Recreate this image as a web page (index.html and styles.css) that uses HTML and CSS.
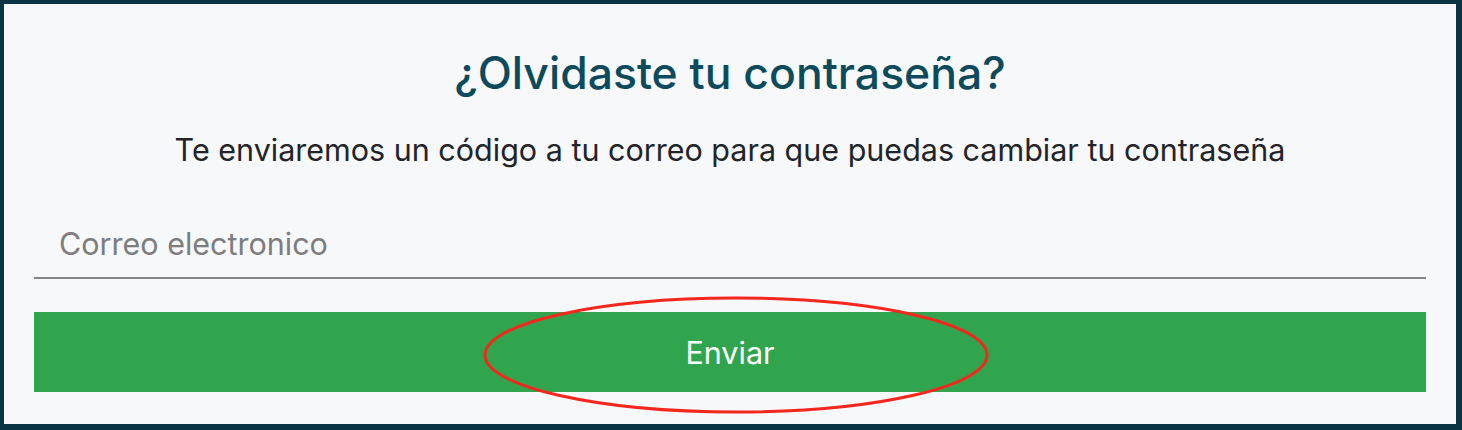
FILE: index.html
```html
<!DOCTYPE html>
<html lang="es">
<head>
<meta charset="utf-8">
<link rel="stylesheet" href="styles.css">
</head>
<body>
<div class="frame">
  <main class="panel">
    <h1 class="title">¿Olvidaste tu contraseña?</h1>
    <p class="subtitle">Te enviaremos un código a tu correo para que puedas cambiar tu contraseña</p>
    <div class="field">
      <input class="input" type="email" placeholder="Correo electronico">
    </div>
    <div class="btn-wrap">
      <button class="btn">Enviar</button>
      <svg class="mark" width="510" height="122" viewBox="0 0 510 122">
        <ellipse cx="255" cy="61" rx="251" ry="57" fill="none" stroke="#f5261c" stroke-width="3"/>
      </svg>
    </div>
  </main>
</div>
</body>
</html>
```
FILE: styles.css
```css
* { box-sizing: border-box; }
html, body { margin: 0; padding: 0; }
body {
  background: #0a3444;
  width: 1462px;
  height: 430px;
  font-family: Inter, "Noto Sans", sans-serif;
}
.frame {
  padding: 4px 6px 6px 4px;
  height: 430px;
}
.panel {
  background: #f7f8fa;
  height: 100%;
  padding: 0 30px;
  display: flex;
  flex-direction: column;
  align-items: stretch;
}
.title {
  margin: 43px 0 0;
  text-align: center;
  font-size: 44.5px;
  font-weight: 500;
  color: #0d4a5c;
  line-height: 52px;
}
.subtitle {
  margin: 33px 0 0;
  text-align: center;
  font-size: 30.5px;
  color: #222428;
  line-height: 36px;
}
.field {
  margin-top: 53px;
  border-bottom: 2px solid #858585;
  height: 58px;
}
.input {
  width: 100%;
  border: none;
  background: transparent;
  font-family: inherit;
  font-size: 30.5px;
  padding: 0 0 0 25px;
  height: 44px;
  outline: none;
  color: #222;
}
.input::placeholder { color: #7d7d7d; }
.btn-wrap {
  position: relative;
  margin-top: 33px;
}
.btn {
  display: block;
  width: 100%;
  height: 80px;
  border: none;
  background: #30a54d;
  color: #fff;
  font-family: inherit;
  font-size: 30.5px;
  padding: 0;
}
.mark {
  position: absolute;
  left: 447px;
  top: -18px;
  pointer-events: none;
}
```
